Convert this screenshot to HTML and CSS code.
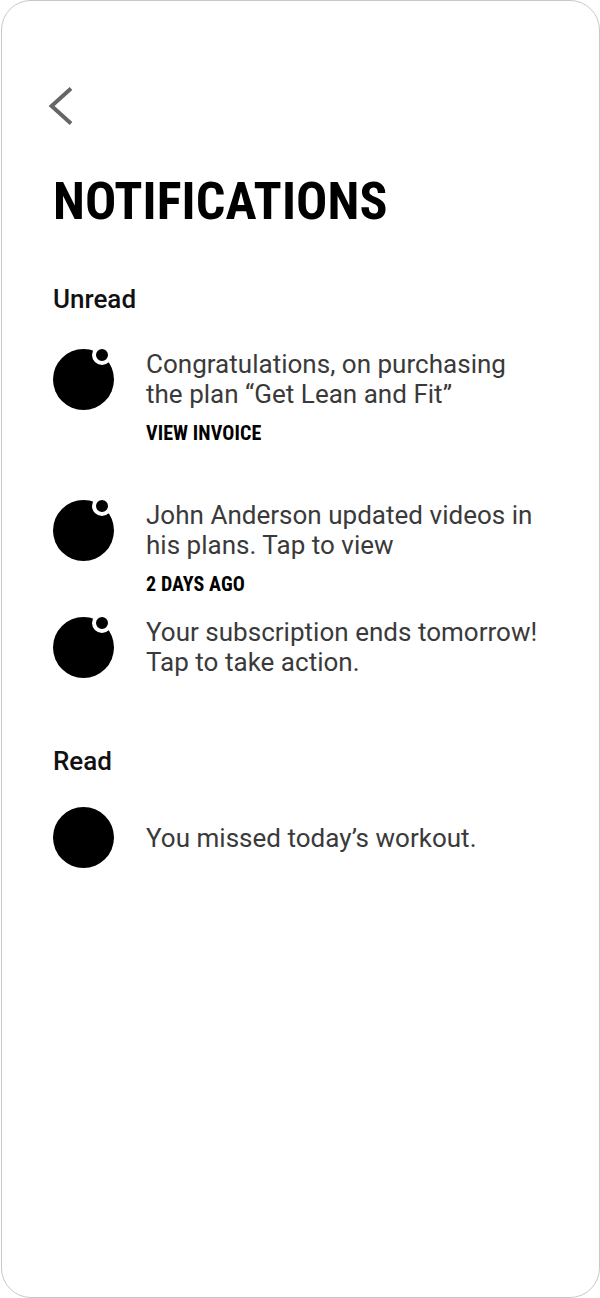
FILE: index.html
```html
<!DOCTYPE html>
<html lang="en">
<head>
  <meta charset="UTF-8">
  <title>Notifications</title>
  <link rel="stylesheet" href="styles.css">
</head>
<body>
  <div class="screen">
    <a class="back" href="#back">
      <svg width="26" height="42" viewBox="0 0 26 42"><path d="M24 2.5 L4.6 20 L24 37.5" fill="none" stroke="#666" stroke-width="4"/></svg>
    </a>

    <h1 class="title">NOTIFICATIONS</h1>

    <!-- Unread -->
    <h2 class="section-title">Unread</h2>
    <div class="note note-first">
      <div class="avatar unread"></div>
      <div class="note-body">
        <p class="note-text">Congratulations, on purchasing<br>the plan “Get Lean and Fit”</p>
        <div class="note-meta">VIEW INVOICE</div>
      </div>
    </div>
    <div class="note note-second">
      <div class="avatar unread"></div>
      <div class="note-body">
        <p class="note-text">John Anderson updated videos in<br>his plans. Tap to view</p>
        <div class="note-meta">2 DAYS AGO</div>
      </div>
    </div>
    <div class="note note-third">
      <div class="avatar unread"></div>
      <div class="note-body">
        <p class="note-text">Your subscription ends tomorrow!<br>Tap to take action.</p>
      </div>
    </div>

    <!-- Read -->
    <h2 class="section-title section-read">Read</h2>
    <div class="note note-read">
      <div class="avatar"></div>
      <div class="note-body">
        <p class="note-text">You missed today’s workout.</p>
      </div>
    </div>
  </div>
</body>
</html>
```

FILE: styles.css
```css
html, body {
  margin: 0;
  padding: 0;
  background-color: #fff;
}

.screen {
  box-sizing: border-box;
  width: 599px;
  height: 1298px;
  margin-left: 1px;
  padding: 85px 0 0 51px;
  border: 1px solid #c8c8c8;
  border-radius: 30px;
  font-family: Roboto, sans-serif;
  color: #000;
  overflow: hidden;
}

.back {
  display: block;
  width: 26px;
  height: 42px;
  margin-left: -6px;
}

.back svg {
  display: block;
}

.title {
  margin: 44px 0 0 0;
  font-size: 52px;
  line-height: 60px;
  font-weight: 700;
  font-stretch: 75%;
  letter-spacing: 0.1px;
}

.section-title {
  margin: 52px 0 0 0;
  font-size: 26px;
  line-height: 30px;
  font-weight: 500;
  color: #111;
}

.section-read {
  margin-top: 68px;
}

.note {
  display: flex;
  gap: 32px;
}

.note-first {
  margin-top: 35px;
}

.note-second {
  margin-top: 55px;
}

.note-third {
  margin-top: 21px;
}

.note-read {
  margin-top: 31px;
  align-items: center;
}

.avatar {
  position: relative;
  flex: none;
  width: 61px;
  height: 61px;
  border-radius: 50%;
  background-color: #000;
}

.avatar.unread::after {
  content: "";
  position: absolute;
  top: -4px;
  right: 2px;
  width: 12px;
  height: 12px;
  border: 4px solid #fff;
  border-radius: 50%;
  background-color: #000;
}

.note-text {
  margin: 0;
  font-size: 26px;
  line-height: 30px;
  letter-spacing: 0.02px;
  color: #3a3a3a;
}

.note-meta {
  margin-top: 12px;
  font-size: 20px;
  line-height: 24px;
  font-weight: 700;
  font-stretch: 75%;
  letter-spacing: 0.1px;
}
```
